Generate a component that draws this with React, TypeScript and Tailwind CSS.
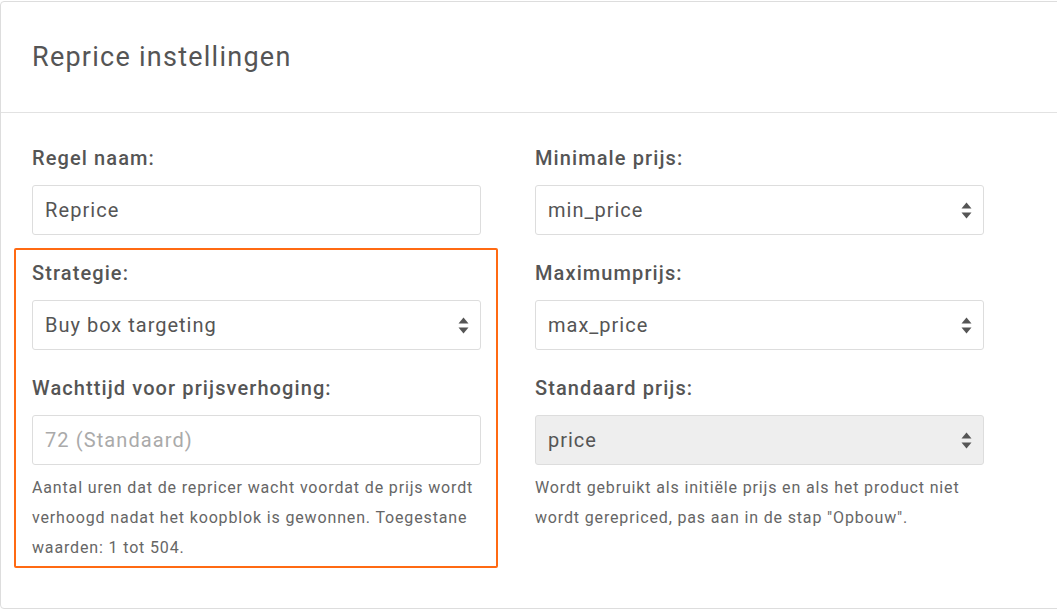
import React from 'react';

const SortArrows = () => (
  <svg width="11" height="17" viewBox="0 0 11 17" className="shrink-0">
    <path d="M5.5 0.5 L10.5 6.5 L0.5 6.5 Z" fill="#555" />
    <path d="M0.5 10.5 L10.5 10.5 L5.5 16.5 Z" fill="#555" />
  </svg>
);

const Label = ({ children }: { children: React.ReactNode }) => (
  <div className="h-[26px] leading-[26px] mb-[14px] text-[20px] tracking-[1.1px] font-medium text-[#555]">{children}</div>
);

const TextInput = ({ value, placeholder }: { value?: string; placeholder?: string }) => (
  <div className="h-[50px] border border-[#ddd] rounded-[3px] bg-white flex items-center px-[12px] text-[20px] tracking-[1.1px]">
    {value ? <span className="text-[#555]">{value}</span> : <span className="text-[#aaa]">{placeholder}</span>}
  </div>
);

const Select = ({ value, disabled }: { value: string; disabled?: boolean }) => (
  <div
    className={`h-[50px] border border-[#ddd] rounded-[3px] flex items-center justify-between pl-[12px] pr-[11px] text-[20px] tracking-[1px] text-[#555] ${
      disabled ? 'bg-[#eee]' : 'bg-white'
    }`}
  >
    <span>{value}</span>
    <SortArrows />
  </div>
);

const Help = ({ children }: { children: React.ReactNode }) => (
  <p className="mt-[8px] text-[16px] tracking-[0.85px] leading-[30px] text-[#666]">{children}</p>
);

export default function App() {
  return (
    <div className="w-[1057px] h-[610px] overflow-hidden bg-white" style={{ fontFamily: 'Roboto, "Noto Sans", sans-serif' }}>
      <div className="w-[1070px] h-[608px] border border-[#ddd] rounded-[4px] mt-[1px]">
        {/* Header */}
        <div className="h-[111px] border-b border-[#e2e2e2] flex items-center pl-[31px]">
          <h1 className="text-[27px] tracking-[1.25px] text-[#555] font-normal">Reprice instellingen</h1>
        </div>

        {/* Body */}
        <div className="flex pt-[32px] pl-[31px]">
          {/* Left column */}
          <div className="w-[449px]">
            <div className="mb-[13px]">
              <Label>Regel naam:</Label>
              <TextInput value="Reprice" />
            </div>
            <div className="-ml-[18px] w-[484px] border-2 border-[#ff6a13] rounded-[2px] pt-[10px] pl-[16px] pr-[15px] pb-[3px]">
              <div className="mb-[25px]">
                <Label>Strategie:</Label>
                <Select value="Buy box targeting" />
              </div>
              <div>
                <Label>Wachttijd voor prijsverhoging:</Label>
                <TextInput placeholder="72 (Standaard)" />
                <Help>
                  Aantal uren dat de repricer wacht voordat de prijs wordt verhoogd nadat het koopblok is gewonnen. Toegestane
                  waarden: 1 tot 504.
                </Help>
              </div>
            </div>
          </div>

          {/* Right column */}
          <div className="w-[449px] ml-[54px]">
            <div className="mb-[25px]">
              <Label>Minimale prijs:</Label>
              <Select value="min_price" />
            </div>
            <div className="mb-[25px]">
              <Label>Maximumprijs:</Label>
              <Select value="max_price" />
            </div>
            <div>
              <Label>Standaard prijs:</Label>
              <Select value="price" disabled />
              <Help>
                Wordt gebruikt als initiële prijs en als het product niet wordt gerepriced, pas aan in de stap "Opbouw".
              </Help>
            </div>
          </div>
        </div>
      </div>
    </div>
  );
}
